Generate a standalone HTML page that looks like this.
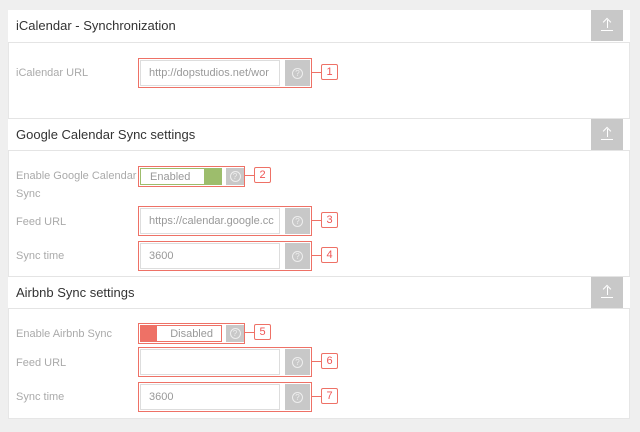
<!DOCTYPE html>
<html><head><style>
*{margin:0;padding:0;box-sizing:border-box}
body{width:640px;height:432px;background:#efefef;position:relative;font-family:"Liberation Sans",sans-serif;overflow:hidden}
.panel{position:absolute;left:8px;top:10px;width:622px;height:409px;background:#fff;border:1px solid #e6e6e6}
.a{position:absolute}
.h{position:absolute;left:8px;width:622px;height:33px;border-top:1px solid #e4e4e4;border-bottom:1px solid #e4e4e4;background:#fff}
.h span{position:absolute;left:8px;top:8px;font-size:13px;color:#333}
.up{position:absolute;right:7px;top:0;width:32px;height:31px;background:#c8c8c8}
.up i{position:absolute;left:10px;top:20px;width:12px;height:1px;background:#fff}
.up b{position:absolute;left:15.5px;top:10px;width:1px;height:8px;background:#fff}
.up em{position:absolute;left:13px;top:9px;width:6px;height:6px;border-left:1px solid #fff;border-top:1px solid #fff;transform:rotate(45deg)}
.lbl{position:absolute;left:16px;font-size:11px;color:#aaa;line-height:18px}
.box{position:absolute;left:138px;border:1px solid #ee7166}
.in{position:absolute;left:1px;top:1px;height:26px;width:140px;border:1px solid #ddd;font-size:11px;color:#999;padding:6px 0 0 8px;white-space:nowrap;overflow:hidden}
.hp{position:absolute;top:1px;width:25px;height:26px;background:#c8c8c8}
.q{position:absolute;left:50%;top:50%;width:11px;height:11px;margin:-5.5px 0 0 -5.5px;border:1px solid #eee;border-radius:50%;color:#eee;font-size:8px;line-height:9px;text-align:center}
.ln{position:absolute;height:1px;width:9px;background:#ee7166}
.bd{position:absolute;width:17px;height:16px;border:1px solid #ee7166;border-radius:2px;color:#e55;font-size:11px;text-align:center;line-height:14px;background:#fff}
</style></head><body>
<div class="panel"></div>
<div class="h" style="top:10px;border-top:none"><span>iCalendar - Synchronization</span><div class="up"><em></em><b></b><i></i></div></div>
<div class="h" style="top:118px"><span>Google Calendar Sync settings</span><div class="up"><em></em><b></b><i></i></div></div>
<div class="h" style="top:276px"><span>Airbnb Sync settings</span><div class="up"><em></em><b></b><i></i></div></div>

<div class="lbl" style="top:64px">iCalendar URL</div>
<div class="box" style="top:58px;width:174px;height:30px"><div class="in">http://dopstudios.net/wor</div><div class="hp" style="left:146px"><div class="q">?</div></div></div>
<div class="ln" style="left:312px;top:72px"></div><div class="bd" style="left:321px;top:64px">1</div>

<div class="lbl" style="top:167px">Enable Google Calendar<br>Sync</div>
<div class="box" style="top:166px;width:107px;height:21px">
<div class="a" style="left:1px;top:1px;width:82px;height:17px;border:1px solid #9dbd6c;font-size:11px;color:#999;padding:2px 0 0 9px">Enabled<div class="a" style="right:0;top:0;width:17px;height:15px;background:#9dbd6c"></div></div>
<div class="hp" style="left:87px;width:18px;height:17px"><div class="q">?</div></div></div>
<div class="ln" style="left:245px;top:175px"></div><div class="bd" style="left:254px;top:167px">2</div>

<div class="lbl" style="top:213px">Feed URL</div>
<div class="box" style="top:206px;width:174px;height:30px"><div class="in">https://calendar.google.cc</div><div class="hp" style="left:146px"><div class="q">?</div></div></div>
<div class="ln" style="left:312px;top:220px"></div><div class="bd" style="left:321px;top:212px">3</div>

<div class="lbl" style="top:247px">Sync time</div>
<div class="box" style="top:241px;width:174px;height:30px"><div class="in">3600</div><div class="hp" style="left:146px"><div class="q">?</div></div></div>
<div class="ln" style="left:312px;top:255px"></div><div class="bd" style="left:321px;top:247px">4</div>

<div class="lbl" style="top:325px">Enable Airbnb Sync</div>
<div class="box" style="top:323px;width:107px;height:21px">
<div class="a" style="left:1px;top:1px;width:82px;height:17px;border:1px solid #ee7166;font-size:11px;color:#999;padding:2px 8px 0 0;text-align:right">Disabled<div class="a" style="left:0;top:0;width:16px;height:15px;background:#ee7166"></div></div>
<div class="hp" style="left:87px;width:18px;height:17px"><div class="q">?</div></div></div>
<div class="ln" style="left:245px;top:332px"></div><div class="bd" style="left:254px;top:324px">5</div>

<div class="lbl" style="top:354px">Feed URL</div>
<div class="box" style="top:347px;width:174px;height:30px"><div class="in"></div><div class="hp" style="left:146px"><div class="q">?</div></div></div>
<div class="ln" style="left:312px;top:361px"></div><div class="bd" style="left:321px;top:353px">6</div>

<div class="lbl" style="top:388px">Sync time</div>
<div class="box" style="top:382px;width:174px;height:30px"><div class="in">3600</div><div class="hp" style="left:146px"><div class="q">?</div></div></div>
<div class="ln" style="left:312px;top:396px"></div><div class="bd" style="left:321px;top:388px">7</div>
</body></html>
